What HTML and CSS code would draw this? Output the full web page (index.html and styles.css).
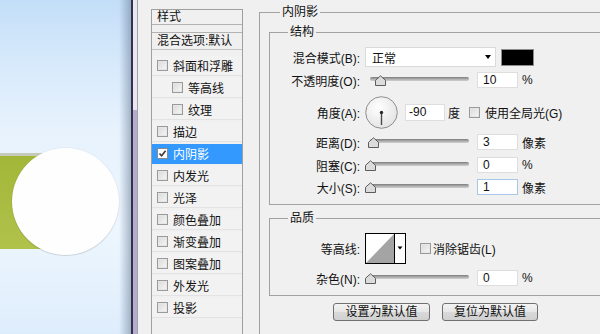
FILE: index.html
```html
<!DOCTYPE html>
<html lang="zh-CN">
<head>
<meta charset="utf-8">
<title>图层样式 - 内阴影</title>
<link rel="stylesheet" href="styles.css">
</head>
<body>
<div class="canvas">
  <div class="bar"></div>
  <div class="ball"></div>
</div>
<div class="edge-dark"></div>
<div class="edge-scroll"></div>
<div class="edge-line"></div>
<div class="dialog">
  <div class="styles-list">
    <div class="list-head">样式</div>
    <div class="list-blend">混合选项:默认</div>
    <div class="list-rows">
      <div class="lrow"><span class="cb"></span>斜面和浮雕</div>
      <div class="lrow sub"><span class="cb"></span>等高线</div>
      <div class="lrow sub"><span class="cb"></span>纹理</div>
      <div class="lrow"><span class="cb"></span>描边</div>
      <div class="lrow sel"><span class="cb on"><svg width="9" height="9" viewBox="0 0 9 9"><path d="M1.5 4.5 L3.6 6.8 L7.6 1.8" fill="none" stroke="#3a3a3a" stroke-width="1.6"/></svg></span>内阴影</div>
      <div class="lrow"><span class="cb"></span>内发光</div>
      <div class="lrow"><span class="cb"></span>光泽</div>
      <div class="lrow"><span class="cb"></span>颜色叠加</div>
      <div class="lrow"><span class="cb"></span>渐变叠加</div>
      <div class="lrow"><span class="cb"></span>图案叠加</div>
      <div class="lrow"><span class="cb"></span>外发光</div>
      <div class="lrow"><span class="cb"></span>投影</div>
    </div>
  </div>

  <div class="panel">
    <div class="group outer">
      <span class="gtitle t-outer">内阴影</span>

      <div class="group inner struct">
        <span class="gtitle t-inner">结构</span>

        <div class="row r-blend">
          <span class="lbl">混合模式(B):</span>
          <div class="select">正常<span class="caret"></span></div>
          <span class="swatch"></span>
        </div>

        <div class="row r-opacity">
          <span class="lbl">不透明度(O):</span>
          <div class="slider"><span class="track"></span><svg class="thumb" style="left:10px" width="11" height="11" viewBox="0 0 11 11"><path d="M0.5 10.5 V5.3 L5.5 0.8 L10.5 5.3 V10.5 Z" fill="#dcdcdc" stroke="#5c5c5c"/></svg></div>
          <span class="num">10</span>
          <span class="unit">%</span>
        </div>

        <div class="row r-angle">
          <span class="lbl">角度(A):</span>
          <svg class="dial" width="33" height="33" viewBox="0 0 33 33">
            <defs><radialGradient id="dg" cx="40%" cy="35%" r="70%"><stop offset="0" stop-color="#ffffff"/><stop offset="1" stop-color="#e2e2e2"/></radialGradient></defs>
            <circle cx="16.5" cy="16.5" r="15.8" fill="url(#dg)" stroke="#8e8e8e"/>
            <line x1="16.5" y1="16.5" x2="16.5" y2="29" stroke="#4a4a4a" stroke-width="1.4"/>
            <circle cx="16.5" cy="16.5" r="1.7" fill="#2a2a2a"/>
          </svg>
          <span class="num angle">-90</span>
          <span class="deg">度</span>
          <span class="cb gl"></span>
          <span class="cbtext gltext">使用全局光(G)</span>
        </div>

        <div class="row r-dist">
          <span class="lbl">距离(D):</span>
          <div class="slider"><span class="track"></span><svg class="thumb" style="left:3px" width="11" height="11" viewBox="0 0 11 11"><path d="M0.5 10.5 V5.3 L5.5 0.8 L10.5 5.3 V10.5 Z" fill="#dcdcdc" stroke="#5c5c5c"/></svg></div>
          <span class="num">3</span>
          <span class="unit">像素</span>
        </div>

        <div class="row r-choke">
          <span class="lbl">阻塞(C):</span>
          <div class="slider"><span class="track"></span><svg class="thumb" style="left:0px" width="11" height="11" viewBox="0 0 11 11"><path d="M0.5 10.5 V5.3 L5.5 0.8 L10.5 5.3 V10.5 Z" fill="#dcdcdc" stroke="#5c5c5c"/></svg></div>
          <span class="num">0</span>
          <span class="unit">%</span>
        </div>

        <div class="row r-size">
          <span class="lbl">大小(S):</span>
          <div class="slider"><span class="track"></span><svg class="thumb" style="left:0px" width="11" height="11" viewBox="0 0 11 11"><path d="M0.5 10.5 V5.3 L5.5 0.8 L10.5 5.3 V10.5 Z" fill="#dcdcdc" stroke="#5c5c5c"/></svg></div>
          <span class="num focus">1</span>
          <span class="unit">像素</span>
        </div>
      </div>

      <div class="group inner quality">
        <span class="gtitle t-inner">品质</span>

        <div class="row r-contour">
          <span class="lbl">等高线:</span>
          <svg class="contour" width="41" height="31" viewBox="0 0 41 31">
            <rect x="0.5" y="0.5" width="40" height="30" fill="#ffffff" stroke="#000"/>
            <polygon points="1,30 29,1 29,30" fill="#a4a4a4"/>
            <line x1="29.5" y1="0.5" x2="29.5" y2="30.5" stroke="#000"/>
            <polygon points="32.5,13.5 37.5,13.5 35,16.5" fill="#000"/>
          </svg>
          <span class="cb aa"></span>
          <span class="cbtext aatext">消除锯齿(L)</span>
        </div>

        <div class="row r-noise">
          <span class="lbl">杂色(N):</span>
          <div class="slider"><span class="track"></span><svg class="thumb" style="left:0px" width="11" height="11" viewBox="0 0 11 11"><path d="M0.5 10.5 V5.3 L5.5 0.8 L10.5 5.3 V10.5 Z" fill="#dcdcdc" stroke="#5c5c5c"/></svg></div>
          <span class="num">0</span>
          <span class="unit">%</span>
        </div>
      </div>

      <div class="buttons">
        <button class="btn b1">设置为默认值</button>
        <button class="btn b2">复位为默认值</button>
      </div>
    </div>
  </div>
</div>
</body>
</html>
```

FILE: styles.css
```css
html, body {
  margin: 0;
  padding: 0;
}
body {
  width: 600px;
  height: 334px;
  overflow: hidden;
  display: flex;
  font-family: "Liberation Sans", "Noto Sans CJK SC", sans-serif;
  font-size: 12px;
  color: #111;
}

/* ---------- left canvas ---------- */
.canvas {
  position: relative;
  width: 131px;
  height: 334px;
  flex: none;
  background:
    linear-gradient(to right, rgba(100,120,150,0) 119px, rgba(100,120,150,.5) 131px),
    linear-gradient(#c3def8 0, #d6e9fb 60px, #e7f2fd 130px, #edf6fe 230px, #deedfc 334px);
}
.bar {
  margin-top: 153px;
  width: 70px;
  height: 96px;
  box-sizing: border-box;
  border-top: 3px solid #c6cabb;
  background: linear-gradient(#a2b739, #b1c24b);
}
.ball {
  position: absolute;
  left: 12px;
  top: 148px;
  width: 107px;
  height: 107px;
  border-radius: 50%;
  background: #fefefe;
  box-shadow: 0 1px 1px rgba(0,0,0,.12), 0 0 0 1px rgba(0,0,0,.03);
}
.edge-dark {
  width: 2px;
  flex: none;
  background: #34324a;
}
.edge-scroll {
  width: 4px;
  flex: none;
  background: linear-gradient(#e9e7f1 0, #e9e7f1 110px, #b5adcb 110px, #b5adcb 334px);
}
.edge-line {
  width: 1px;
  flex: none;
  background: #a2a0ac;
}

/* ---------- dialog ---------- */
.dialog {
  flex: 1;
  display: flex;
  align-items: flex-start;
  background: #f0f0f0;
  padding-left: 13px;
  height: 334px;
  overflow: hidden;
}

.styles-list {
  flex: none;
  margin-top: 9px;
  width: 92px;
  height: 340px;
  box-sizing: border-box;
  border: 1px solid #a0a0a0;
  border-bottom: none;
}
.list-head {
  height: 14px;
  line-height: 14px;
  padding-left: 5px;
  border-bottom: 1px solid #b2b2b2;
}
.list-blend {
  margin-top: 7px;
  height: 16px;
  line-height: 16px;
  padding-left: 5px;
  border-top: 1px solid #b2b2b2;
  border-bottom: 1px solid #c4c4c4;
  white-space: nowrap;
}
.list-rows {
  margin-top: 6px;
  display: flex;
  flex-direction: column;
  gap: 2px;
}
.lrow {
  height: 20px;
  box-sizing: border-box;
  display: flex;
  align-items: center;
  padding-left: 5px;
  background: #f2f2f2;
  border-bottom: 1px solid #e3e3e3;
  white-space: nowrap;
}
.lrow.sub {
  padding-left: 20px;
}
.lrow.sel {
  background: #3399ff;
  color: #fff;
  border-bottom-color: #3399ff;
}
.cb {
  flex: none;
  width: 11px;
  height: 11px;
  box-sizing: border-box;
  border: 1px solid #9a9a9a;
  background: linear-gradient(135deg, #d9d9d9, #f7f7f7);
  box-shadow: inset 0 0 0 1px #e6e6e6;
  display: flex;
  align-items: center;
  justify-content: center;
}
.lrow .cb {
  margin-right: 5px;
}
.cb.on {
  background: #fff;
  border-color: #8a8a8a;
  box-shadow: none;
}

/* ---------- right panel ---------- */
.panel {
  flex: none;
  margin-left: 16px;
  margin-top: 12px;
}
.group {
  border: 1px solid #a2a2a2;
  width: 420px;
  box-sizing: border-box;
}
.outer {
  border-right: none;
  padding-left: 9px;
  height: 340px;
  border-bottom: none;
}
.gtitle {
  display: block;
  width: max-content;
  margin-top: -8px;
  padding: 0 2px;
  line-height: 14px;
  background: #f0f0f0;
}
.t-outer {
  margin-left: 11px;
}
.t-inner {
  margin-left: 18px;
}
.inner {
  border-right: none;
}
.struct {
  margin-top: 13px;
  padding-bottom: 7px;
}
.quality {
  margin-top: 13px;
  padding-bottom: 7px;
}

.row {
  display: flex;
  align-items: center;
  height: 20px;
  white-space: nowrap;
}
.lbl {
  flex: none;
  width: 90px;
  text-align: right;
  margin-right: 5px;
}
.r-blend { margin-top: 8px; }
.r-opacity { margin-top: 3px; }
.r-angle { margin-top: 6px; height: 33px; }
.r-dist { margin-top: 3px; }
.r-choke { margin-top: 3px; }
.r-size { margin-top: 2px; }
.r-contour { margin-top: 8px; height: 31px; }
.r-noise { margin-top: 4px; }

.select {
  flex: none;
  width: 131px;
  height: 20px;
  box-sizing: border-box;
  border: 1px solid #dadada;
  background: #fff;
  padding-left: 6px;
  display: flex;
  align-items: center;
}
.caret {
  margin-left: auto;
  margin-right: 4px;
  width: 0;
  height: 0;
  border-left: 3.5px solid transparent;
  border-right: 3.5px solid transparent;
  border-top: 4px solid #000;
}
.swatch {
  flex: none;
  margin-left: 5px;
  width: 33px;
  height: 17px;
  box-sizing: border-box;
  border: 1px solid #8c8c8c;
  background: #000;
}

.slider {
  position: relative;
  flex: none;
  width: 104px;
  height: 20px;
  box-sizing: border-box;
  padding-left: 5px;
}
.track {
  display: block;
  margin-top: 7px;
  width: 99px;
  height: 4px;
  border-radius: 2px;
  background: linear-gradient(#7c7c7c, #b4b4b4 60%, #cfcfcf);
}
.thumb {
  position: absolute;
  top: 5px;
}

.num {
  flex: none;
  margin-left: 8px;
  width: 41px;
  height: 16px;
  box-sizing: border-box;
  border: 1px solid #dedede;
  background: #fff;
  padding-left: 5px;
  line-height: 14px;
}
.num.focus {
  border-color: #a9c6e6;
}
.num.angle {
  margin-left: 7px;
  width: 40px;
  height: 17px;
  line-height: 15px;
  padding-left: 3px;
}
.unit {
  margin-left: 4px;
}
.dial {
  flex: none;
}
.deg {
  margin-left: 3px;
}
.gl {
  margin-left: 9px;
}
.gltext {
  margin-left: 5px;
}
.contour {
  flex: none;
}
.aa {
  margin-left: 14px;
}
.aatext {
  margin-left: 2px;
}

.buttons {
  display: flex;
  gap: 12px;
  margin-top: 7px;
  padding-left: 64px;
}
.btn {
  flex: none;
  height: 18px;
  padding: 0;
  box-sizing: border-box;
  border: 1px solid #707070;
  border-radius: 3px;
  background: linear-gradient(#f4f4f4, #e6e6e6 50%, #d9d9d9 51%, #d0d0d0);
  font-family: "Liberation Sans", "Noto Sans CJK SC", sans-serif;
  font-size: 12px;
  line-height: 16px;
  color: #111;
}
.b1 { width: 97px; }
.b2 { width: 96px; }
```
